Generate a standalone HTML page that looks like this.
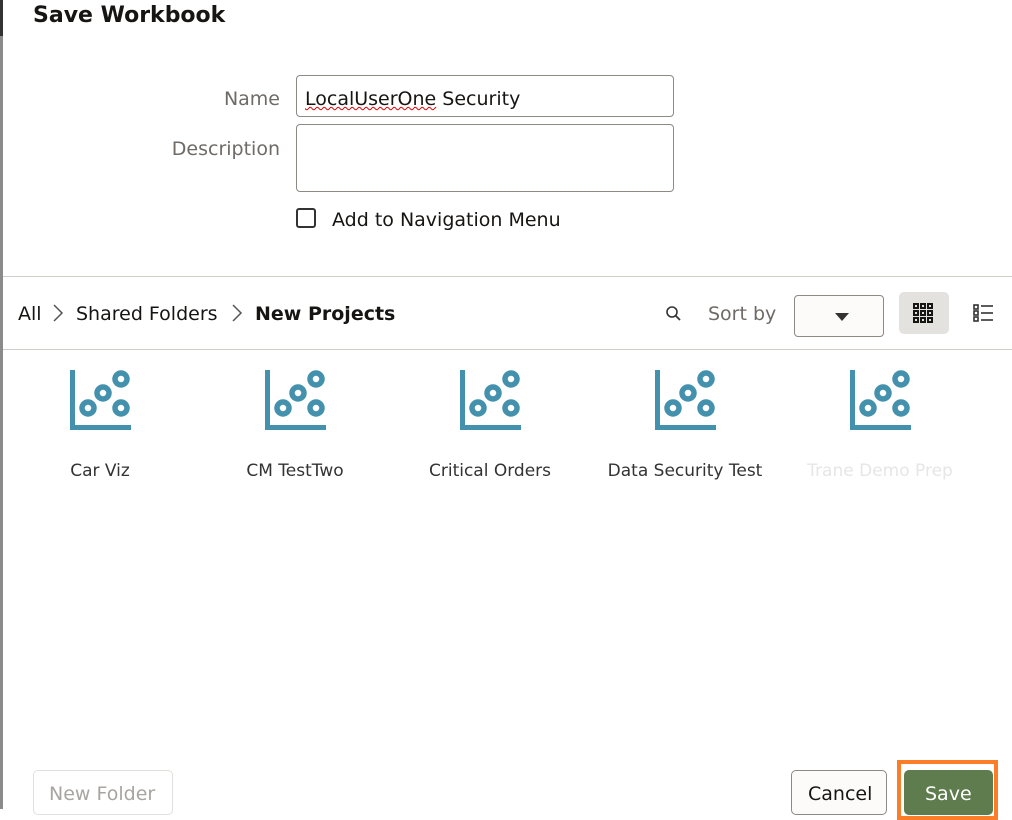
<!DOCTYPE html>
<html><head><style>
body{margin:0;width:1012px;height:809px;position:relative;overflow:hidden;background:#fff;font-family:"DejaVu Sans","Liberation Sans",sans-serif;color:#161513}
.a{position:absolute}
.lbl{color:#6f6a66;font-size:19px;text-align:right}
.inp{border:1px solid #8d8984;border-radius:4px;background:#fff}
.cap{font-size:17px;color:#333;text-align:center;width:160px}
</style></head><body>
<div class="a" style="left:0;top:0;width:3px;height:809px;background:#8b8b8b"></div>
<div class="a" style="left:0;top:0;width:3px;height:36px;background:#333"></div>
<div class="a" style="left:33px;top:3px;font-size:22px;font-weight:bold">Save Workbook</div>
<div class="a lbl" style="left:100px;width:180px;top:88px">Name</div>
<div class="a lbl" style="left:100px;width:180px;top:138px">Description</div>
<div class="a inp" style="left:296px;top:75px;width:376px;height:40px"></div>
<div class="a" style="left:305px;top:88px;font-size:19px;color:#161513"><span style="text-decoration:underline wavy #d00;text-decoration-thickness:1px">LocalUserOne</span> Security</div>
<div class="a inp" style="left:296px;top:124px;width:376px;height:66px"></div>
<div class="a" style="left:296px;top:208px;width:20px;height:20px;border:2px solid #333;border-radius:3px;box-sizing:border-box"></div>
<div class="a" style="left:332px;top:209px;font-size:19px">Add to Navigation Menu</div>
<div class="a" style="left:3px;right:0;top:276px;height:1px;background:#d0ccc8"></div>
<svg class="a" style="left:52px;top:303px" width="12" height="20" fill="none" stroke="#555" stroke-width="1.5"><path d="M2 2 L10 10 L2 18"/></svg>
<svg class="a" style="left:231px;top:303px" width="12" height="20" fill="none" stroke="#555" stroke-width="1.5"><path d="M2 2 L10 10 L2 18"/></svg>
<div class="a" style="left:18px;top:303px;font-size:19px">All</div>
<div class="a" style="left:76px;top:303px;font-size:19px">Shared Folders</div>
<div class="a" style="left:255px;top:303px;font-size:19px;font-weight:bold">New Projects</div>
<svg class="a" style="left:665px;top:305px" width="18" height="18"><circle cx="7" cy="7" r="5" fill="none" stroke="#333" stroke-width="1.6"/><line x1="11" y1="11" x2="15" y2="15" stroke="#333" stroke-width="1.8"/></svg>
<div class="a" style="left:708px;top:303px;font-size:19px;color:#6f6a66">Sort by</div>
<div class="a inp" style="left:794px;top:295px;width:88px;height:40px;background:#fcfbfa"></div>
<div class="a" style="left:835px;top:313px;width:0;height:0;border-left:7px solid transparent;border-right:7px solid transparent;border-top:8px solid #333"></div>
<div class="a" style="left:899px;top:292px;width:50px;height:42px;background:#e4e2df;border-radius:5px"></div>
<svg class="a" style="left:913px;top:303px" width="22" height="20" fill="none" stroke="#161513" stroke-width="2"><g>
<rect x="1" y="1" width="4" height="4"/><rect x="8" y="1" width="4" height="4"/><rect x="15" y="1" width="4" height="4"/>
<rect x="1" y="8" width="4" height="4"/><rect x="8" y="8" width="4" height="4"/><rect x="15" y="8" width="4" height="4"/>
<rect x="1" y="15" width="4" height="4"/><rect x="8" y="15" width="4" height="4"/><rect x="15" y="15" width="4" height="4"/></g></svg>
<svg class="a" style="left:973px;top:304px" width="22" height="18" fill="none" stroke="#333" stroke-width="1.6"><rect x="1" y="1" width="4" height="4"/><rect x="1" y="7" width="4" height="4"/><rect x="1" y="13" width="4" height="4"/><line x1="8" y1="2" x2="20" y2="2"/><line x1="8" y1="9" x2="20" y2="9"/><line x1="8" y1="16" x2="20" y2="16"/></svg>
<div class="a" style="left:3px;right:0;top:349px;height:1px;background:#d0ccc8"></div>

<svg width="0" height="0" style="position:absolute"><defs><g id="ic"><rect x="0" y="0" width="5" height="60" fill="#4391ad"/><rect x="0" y="55" width="61" height="5" fill="#4391ad"/><g fill="none" stroke="#4391ad" stroke-width="5.5"><circle cx="18" cy="38" r="6"/><circle cx="33" cy="23" r="6"/><circle cx="51" cy="9" r="6"/><circle cx="51" cy="38" r="6"/></g></g></defs></svg>
<svg class="a" style="left:70px;top:370px" width="64" height="62"><use href="#ic"/></svg>
<svg class="a" style="left:265px;top:370px" width="64" height="62"><use href="#ic"/></svg>
<svg class="a" style="left:460px;top:370px" width="64" height="62"><use href="#ic"/></svg>
<svg class="a" style="left:655px;top:370px" width="64" height="62"><use href="#ic"/></svg>
<svg class="a" style="left:850px;top:370px" width="64" height="62"><use href="#ic"/></svg>
<div class="a cap" style="left:20px;top:461px">Car Viz</div>
<div class="a cap" style="left:215px;top:461px">CM TestTwo</div>
<div class="a cap" style="left:410px;top:461px">Critical Orders</div>
<div class="a cap" style="left:605px;top:461px">Data Security Test</div>
<div class="a cap" style="left:800px;top:461px;color:#e6e6e6">Trane Demo Prep</div>

<div class="a" style="left:33px;top:770px;width:140px;height:45px;border:1px solid #e2dfdc;border-radius:5px;box-sizing:border-box"></div>
<div class="a" style="left:49px;top:783px;font-size:19px;color:#a8a4a0">New Folder</div>
<div class="a" style="left:791px;top:770px;width:96px;height:45px;border:1px solid #8d8984;border-radius:5px;box-sizing:border-box;background:#fcfbfa"></div>
<div class="a" style="left:808px;top:783px;font-size:19px">Cancel</div>
<div class="a" style="left:897px;top:760px;width:101px;height:60px;box-sizing:border-box;border:4px solid #fb7d27"></div>
<div class="a" style="left:904px;top:770px;width:89px;height:45px;background:#5e7c4e;border-radius:5px"></div>
<div class="a" style="left:925px;top:783px;font-size:19px;color:#fff">Save</div>
</body></html>
